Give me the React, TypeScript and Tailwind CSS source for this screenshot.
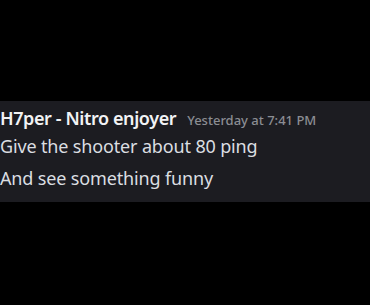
export default function App() {
  return (
    <div className="h-[305px] w-[370px] bg-black pt-[101px] font-['Noto_Sans',sans-serif]">
      <div className="h-[101px] bg-[#1c1c21] pt-[5px] text-[#dbdee1]">
        <div className="flex items-baseline">
          <span className="text-[18px] leading-[24px] font-semibold tracking-[-0.4px] text-[#f2f3f5]">
            H7per - Nitro enjoyer
          </span>
          <span className="ml-[11px] text-[13px] leading-[24px] font-medium text-[#8b8d93]">
            Yesterday at 7:41 PM
          </span>
        </div>
        <div className="mt-[2px] text-[18px] leading-[24px] tracking-[-0.15px]">
          Give the shooter about 80 ping
        </div>
        <div className="mt-[8px] text-[18px] leading-[24px] tracking-[-0.15px]">
          And see something funny
        </div>
      </div>
    </div>
  );
}
